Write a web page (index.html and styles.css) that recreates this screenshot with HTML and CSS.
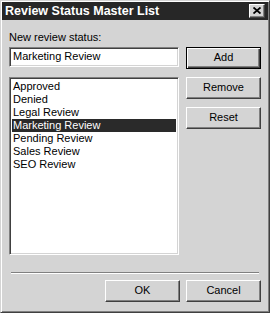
FILE: index.html
```html
<!DOCTYPE html>
<html>
<head>
<meta charset="utf-8">
<link rel="stylesheet" href="styles.css">
</head>
<body>
<div class="window">
  <div class="titlebar">
    <span class="title">Review Status Master List</span>
    <span class="close"><svg width="8" height="7" viewBox="0 0 8 7"><path d="M0.5 0.5 L7.5 6.5 M7.5 0.5 L0.5 6.5" stroke="#000" stroke-width="1.8" fill="none"/></svg></span>
  </div>
  <div class="content">
    <div class="label">New review status:</div>
    <div class="row">
      <div class="field">Marketing Review</div>
      <div class="btn default">Add</div>
    </div>
    <div class="row list-row">
      <div class="listbox">
        <div class="item">Approved</div>
        <div class="item">Denied</div>
        <div class="item">Legal Review</div>
        <div class="item selected">Marketing Review</div>
        <div class="item">Pending Review</div>
        <div class="item">Sales Review</div>
        <div class="item">SEO Review</div>
      </div>
      <div class="side">
        <div class="btn">Remove</div>
        <div class="btn">Reset</div>
      </div>
    </div>
    <div class="separator"></div>
    <div class="footer">
      <div class="btn">OK</div>
      <div class="btn">Cancel</div>
    </div>
  </div>
</div>
</body>
</html>
```

FILE: styles.css
```css
html, body {
  margin: 0;
  padding: 0;
  background: #d4d4d4;
}
body {
  font-family: "Liberation Sans", Arial, sans-serif;
  font-size: 11px;
  line-height: 13px;
  color: #000;
}
.window {
  width: 270px;
  height: 313px;
  box-sizing: border-box;
  background: #d4d4d4;
  border: 1px solid;
  border-color: #d4d4d4 #404040 #404040 #d4d4d4;
  box-shadow: inset 1px 1px #fff, inset -1px -1px #808080;
  padding: 1px;
}
.titlebar {
  height: 18px;
  background: #272727;
  display: flex;
  align-items: center;
  justify-content: space-between;
  padding: 0 3px 0 3px;
}
.title {
  color: #fff;
  font-weight: bold;
  font-size: 12.5px;
  line-height: 18px;
}
.close {
  width: 16px;
  height: 14px;
  box-sizing: border-box;
  background: #d4d4d4;
  border: 1px solid;
  border-color: #fff #404040 #404040 #fff;
  box-shadow: inset -1px -1px #808080;
  display: flex;
  align-items: center;
  justify-content: center;
}
.close svg { display: block; margin-left: -1px; margin-top: -1px; }
.content {
  padding: 11px 6px 0 7px;
}
.label {
  height: 13px;
}
.row {
  display: flex;
  gap: 7px;
  align-items: flex-start;
  margin-top: 3px;
}
.list-row {
  margin-top: 8px;
}
.field {
  width: 170px;
  height: 20px;
  box-sizing: border-box;
  background: #fff;
  border: 1px solid;
  border-color: #808080 #fff #fff #808080;
  box-shadow: inset 1px 1px #404040, inset -1px -1px #d4d4d4;
  padding: 2px 3px 0 3px;
  white-space: nowrap;
}
.btn {
  width: 75px;
  height: 22px;
  box-sizing: border-box;
  background: #d4d4d4;
  border: 1px solid;
  border-color: #fff #404040 #404040 #fff;
  box-shadow: inset -1px -1px #808080;
  display: flex;
  align-items: center;
  justify-content: center;
  padding-bottom: 1px;
}
.btn.default {
  border-color: #000;
  box-shadow: inset 1px 1px #fff, inset -1px -1px #404040, inset -2px -2px #808080;
}
.listbox {
  width: 170px;
  height: 178px;
  box-sizing: border-box;
  background: #fff;
  border: 1px solid;
  border-color: #808080 #fff #fff #808080;
  box-shadow: inset 1px 1px #404040, inset -1px -1px #d4d4d4;
  padding: 2px 2px 0 2px;
}
.item {
  height: 13px;
  padding-left: 1px;
  white-space: nowrap;
}
.item.selected {
  background: #2a2a2a;
  color: #fff;
}
.side {
  display: flex;
  flex-direction: column;
  gap: 8px;
}
.separator {
  margin: 17px 3px 0 2px;
  height: 1px;
  background: #808080;
  border-bottom: 1px solid #fff;
}
.footer {
  display: flex;
  justify-content: flex-end;
  gap: 6px;
  margin-top: 6px;
  padding-right: 1px;
}
```
